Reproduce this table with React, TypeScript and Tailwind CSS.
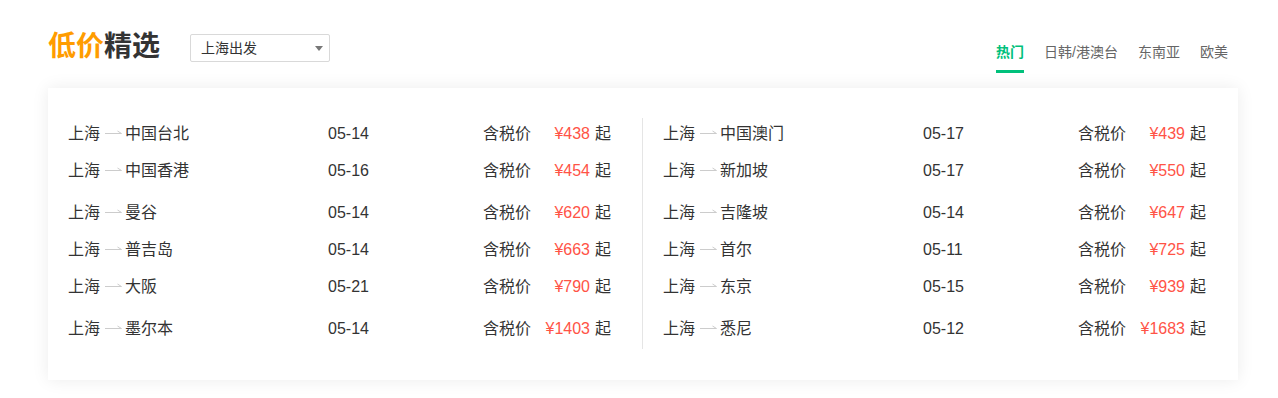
import React from "react";

type Route = { to: string; date: string; price: number };

const leftRoutes: Route[] = [
  { to: "中国台北", date: "05-14", price: 438 },
  { to: "中国香港", date: "05-16", price: 454 },
  { to: "曼谷", date: "05-14", price: 620 },
  { to: "普吉岛", date: "05-14", price: 663 },
  { to: "大阪", date: "05-21", price: 790 },
  { to: "墨尔本", date: "05-14", price: 1403 },
];

const rightRoutes: Route[] = [
  { to: "中国澳门", date: "05-17", price: 439 },
  { to: "新加坡", date: "05-17", price: 550 },
  { to: "吉隆坡", date: "05-14", price: 647 },
  { to: "首尔", date: "05-11", price: 725 },
  { to: "东京", date: "05-15", price: 939 },
  { to: "悉尼", date: "05-12", price: 1683 },
];

// gaps between rows are not even in the original
const rowGaps = ["mt-0", "mt-[7px]", "mt-[12px]", "mt-[7px]", "mt-[7px]", "mt-[12px]"];

const tabs = ["热门", "日韩/港澳台", "东南亚", "欧美"];

function Arrow() {
  return (
    <svg width="17" height="8" viewBox="0 0 17 8" className="ml-[5px] mr-[3px] shrink-0 -translate-y-[1px]">
      <path d="M0 4.5 H16.5 L12.5 2" fill="none" stroke="#cccccc" strokeWidth="1" />
    </svg>
  );
}

function RouteRow({ route, gap }: { route: Route; gap: string }) {
  return (
    <div className={`flex items-center h-[30px] text-[16px] text-[#333] ${gap}`}>
      <div className="w-[260px] flex items-center">
        <span>上海</span>
        <Arrow />
        <span>{route.to}</span>
      </div>
      <div className="w-[155px]">{route.date}</div>
      <div className="w-[48px]">含税价</div>
      <div className="w-[59px] text-right text-[#ff5346]">¥{route.price}</div>
      <div className="ml-[5px]">起</div>
    </div>
  );
}

export default function App() {
  return (
    <div
      className="bg-white min-h-screen pt-[29px] pl-[48px]"
      style={{ fontFamily: '"Liberation Sans", "Noto Sans CJK SC", sans-serif' }}
    >
      <div className="w-[1190px]">
        <div className="flex items-start h-[59px]">
          <h1 className="text-[28px] leading-[36px] font-bold">
            <span className="text-[#ff9c00]">低价</span>
            <span className="text-[#333]">精选</span>
          </h1>
          <div className="ml-[30px] mt-[5px] w-[140px] h-[28px] border border-[#d9d9d9] rounded-[2px] flex items-center justify-between pl-[10px] pr-[6px]">
            <span className="text-[14px] text-[#333]">上海出发</span>
            <span className="w-0 h-0 border-l-[4px] border-r-[4px] border-t-[5px] border-l-transparent border-r-transparent border-t-[#777]" />
          </div>
          <div className="ml-auto mr-[10px] mt-[13px] flex gap-[20px]">
            {tabs.map((t, i) => (
              <div key={t} className="flex flex-col items-center">
                <span
                  className={`text-[14px] leading-[20px] ${
                    i === 0 ? "text-[#00c07b] font-bold" : "text-[#666]"
                  }`}
                >
                  {t}
                </span>
                <span className={`mt-[8px] h-[3px] w-full ${i === 0 ? "bg-[#00c07b]" : ""}`} />
              </div>
            ))}
          </div>
        </div>

        <div className="bg-white shadow-[0_0_16px_rgba(0,0,0,0.08)] pt-[31px] pb-[31px] flex">
          <div className="w-[594px] pl-[20px] pb-[5px]">
            {leftRoutes.map((r, i) => (
              <RouteRow key={r.to} route={r} gap={rowGaps[i]} />
            ))}
          </div>
          <div className="w-px bg-[#e5e5e5] -mt-px" />
          <div className="flex-1 pl-[20px] pb-[5px]">
            {rightRoutes.map((r, i) => (
              <RouteRow key={r.to} route={r} gap={rowGaps[i]} />
            ))}
          </div>
        </div>
      </div>
    </div>
  );
}
